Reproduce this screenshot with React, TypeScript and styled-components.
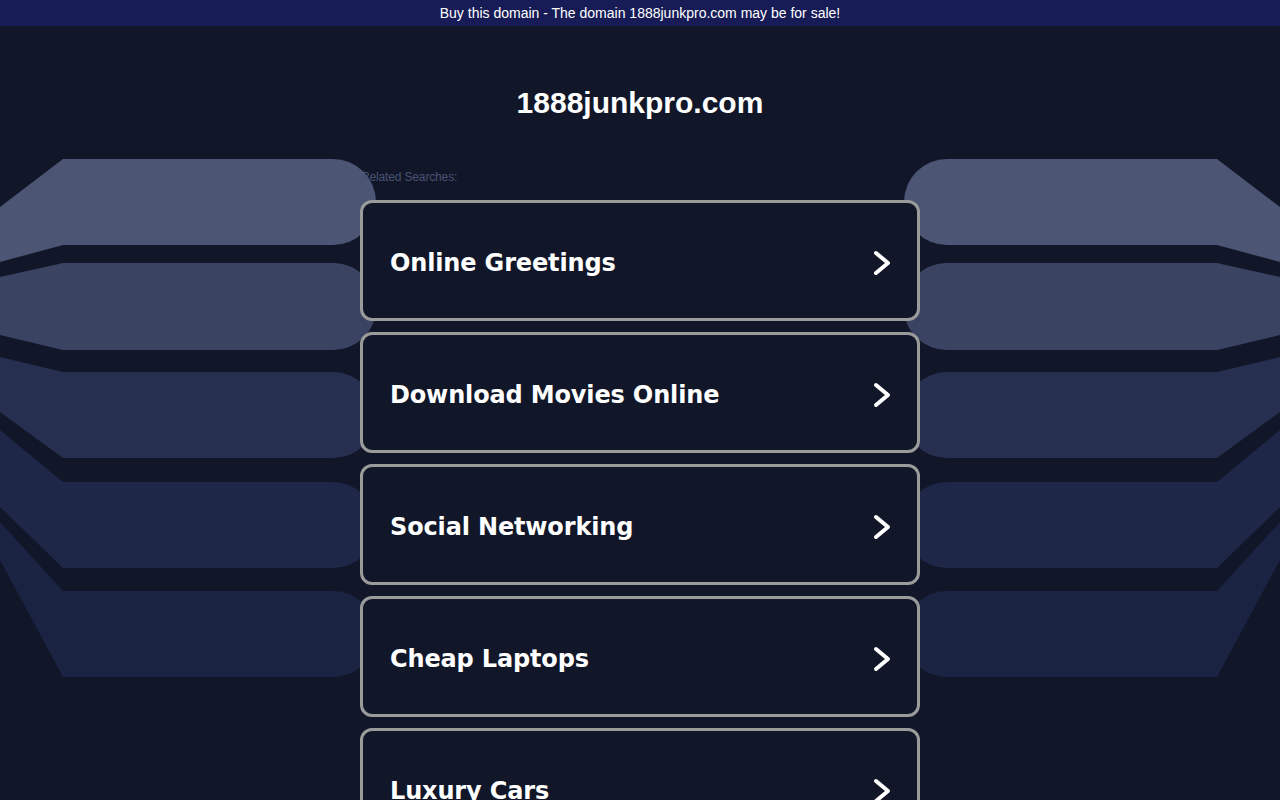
import styled, { createGlobalStyle } from "styled-components";

const GlobalStyle = createGlobalStyle`
  html, body {
    margin: 0;
    padding: 0;
    background: #111729;
  }
  body {
    font-family: "Liberation Sans", Arial, sans-serif;
    overflow: hidden;
  }
`;

const Page = styled.div`
  position: relative;
  min-height: 800px;
  overflow: hidden;
`;

const TopBar = styled.div`
  position: relative;
  z-index: 2;
  height: 26px;
  line-height: 26px;
  background: #171c57;
  color: #ffffff;
  font-size: 14px;
  text-align: center;
`;

const Decor = styled.svg<{ $side: "left" | "right" }>`
  position: absolute;
  top: 0;
  ${(p) => (p.$side === "left" ? "left: 0;" : "right: 0; transform: scaleX(-1);")}
  width: 380px;
  height: 800px;
  z-index: 0;
`;

const Main = styled.div`
  position: relative;
  z-index: 1;
  width: 560px;
  margin: 0 auto;
`;

const Title = styled.h1`
  margin: 59px 0 49px;
  font-size: 30px;
  line-height: 36px;
  font-weight: bold;
  color: #ffffff;
  text-align: center;
`;

const Related = styled.div`
  font-size: 12px;
  line-height: 14px;
  color: #4b5273;
  padding-left: 1px;
  margin-bottom: 16px;
  letter-spacing: -0.15px;
`;

const List = styled.div`
  display: flex;
  flex-direction: column;
  gap: 11px;
`;

const Card = styled.a`
  display: flex;
  align-items: center;
  justify-content: space-between;
  box-sizing: border-box;
  height: 121px;
  padding: 4px 26px 0 27px;
  border: 3px solid #9b9b9b;
  border-radius: 12px;
  background: #111729;
  color: #ffffff;
  text-decoration: none;
  font-family: Verdana, "DejaVu Sans", sans-serif;
  font-size: 24px;
  font-weight: bold;
  letter-spacing: -0.15px;
  flex-shrink: 0;
`;

const shapes = [
  { d: "M0,207 L63,159 L333,159 A43,43 0 0 1 333,245 L63,245 L0,262 Z", fill: "#4c5573" },
  { d: "M0,277 L63,263 L333,263 A43.5,43.5 0 0 1 333,350 L63,350 L0,335 Z", fill: "#3a4361" },
  { d: "M0,357 L63,372 L333,372 A43,43 0 0 1 333,458 L63,458 L0,412 Z", fill: "#262f4f" },
  { d: "M0,430 L63,482 L333,482 A43,43 0 0 1 333,568 L63,568 L0,507 Z", fill: "#1e2747" },
  { d: "M0,522 L63,591 L333,591 A43,43 0 0 1 333,677 L63,677 L0,560 Z", fill: "#1b2343" },
];

const Background = ({ side }: { side: "left" | "right" }) => (
  <Decor $side={side} viewBox="0 0 380 800">
    {shapes.map((s, i) => (
      <path key={i} d={s.d} fill={s.fill} />
    ))}
  </Decor>
);

const Chevron = () => (
  <svg width="18" height="26" viewBox="0 0 18 26">
    <path
      d="M3,3 L15,13 L3,23"
      fill="none"
      stroke="#ffffff"
      strokeWidth="4"
      strokeLinecap="round"
      strokeLinejoin="round"
    />
  </svg>
);

const searches = [
  "Online Greetings",
  "Download Movies Online",
  "Social Networking",
  "Cheap Laptops",
  "Luxury Cars",
];

export default function App() {
  return (
    <Page>
      <GlobalStyle />
      <TopBar>Buy this domain - The domain 1888junkpro.com may be for sale!</TopBar>
      <Background side="left" />
      <Background side="right" />
      <Main>
        <Title>1888junkpro.com</Title>
        <Related>Related Searches:</Related>
        <List>
          {searches.map((s) => (
            <Card key={s} href="#">
              <span>{s}</span>
              <Chevron />
            </Card>
          ))}
        </List>
      </Main>
    </Page>
  );
}
